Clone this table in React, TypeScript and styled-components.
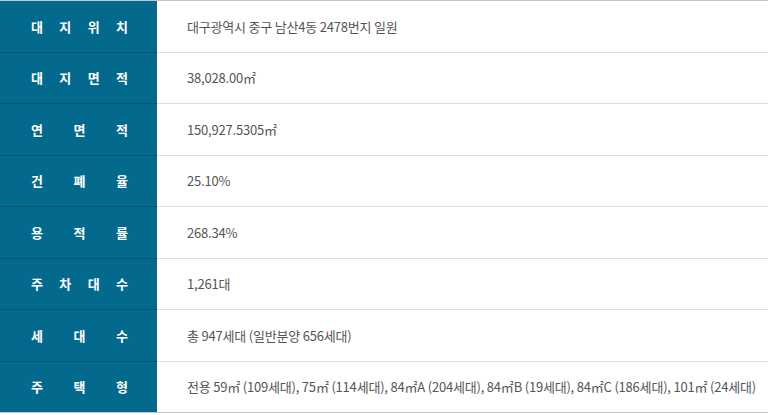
import React from 'react';
import styled, { createGlobalStyle } from 'styled-components';

const GlobalStyle = createGlobalStyle`
    html, body {
        margin: 0;
        padding: 0;
        background: #fff;
    }
    body {
        font-family: 'Noto Sans CJK KR', 'Noto Sans', sans-serif;
    }
`;

const Table = styled.div`
    width: 768px;
    display: grid;
    grid-template-columns: 157px 1fr;
    border-top: 1px solid #c4c4c4;
    border-bottom: 1px solid #c4c4c4;
`;

const HeadCell = styled.div<{ $last?: boolean }>`
    height: 50.5px;
    background-color: #036a8e;
    border-bottom: ${(p) => (p.$last ? 'none' : '1px solid #02577a')};
    display: flex;
    align-items: center;
    justify-content: space-between;
    padding: 0 29px 0 31px;
    color: #fff;
    font-size: 13px;
    font-weight: 700;
`;

const DataCell = styled.div<{ $last?: boolean }>`
    height: 50.5px;
    border-bottom: ${(p) => (p.$last ? 'none' : '1px solid #dcdcdc')};
    display: flex;
    align-items: center;
    padding-left: 30px;
    color: #555;
    font-size: 13px;
    letter-spacing: -0.2px;
    white-space: nowrap;
`;

const rows: [string, string][] = [
    ['대지위치', '대구광역시 중구 남산4동 2478번지 일원'],
    ['대지면적', '38,028.00㎡'],
    ['연면적', '150,927.5305㎡'],
    ['건폐율', '25.10%'],
    ['용적률', '268.34%'],
    ['주차대수', '1,261대'],
    ['세대수', '총 947세대 (일반분양 656세대)'],
    [
        '주택형',
        '전용 59㎡ (109세대), 75㎡ (114세대), 84㎡A (204세대), 84㎡B (19세대), 84㎡C (186세대), 101㎡ (24세대)',
    ],
];

const App = () => {
    return (
        <>
            <GlobalStyle />
            <Table>
                {rows.map(([label, value], i) => {
                    const last = i === rows.length - 1;
                    return (
                        <React.Fragment key={label}>
                            <HeadCell $last={last}>
                                {label.split('').map((ch, j) => (
                                    <span key={j}>{ch}</span>
                                ))}
                            </HeadCell>
                            <DataCell $last={last}>{value}</DataCell>
                        </React.Fragment>
                    );
                })}
            </Table>
        </>
    );
};

export default App;
